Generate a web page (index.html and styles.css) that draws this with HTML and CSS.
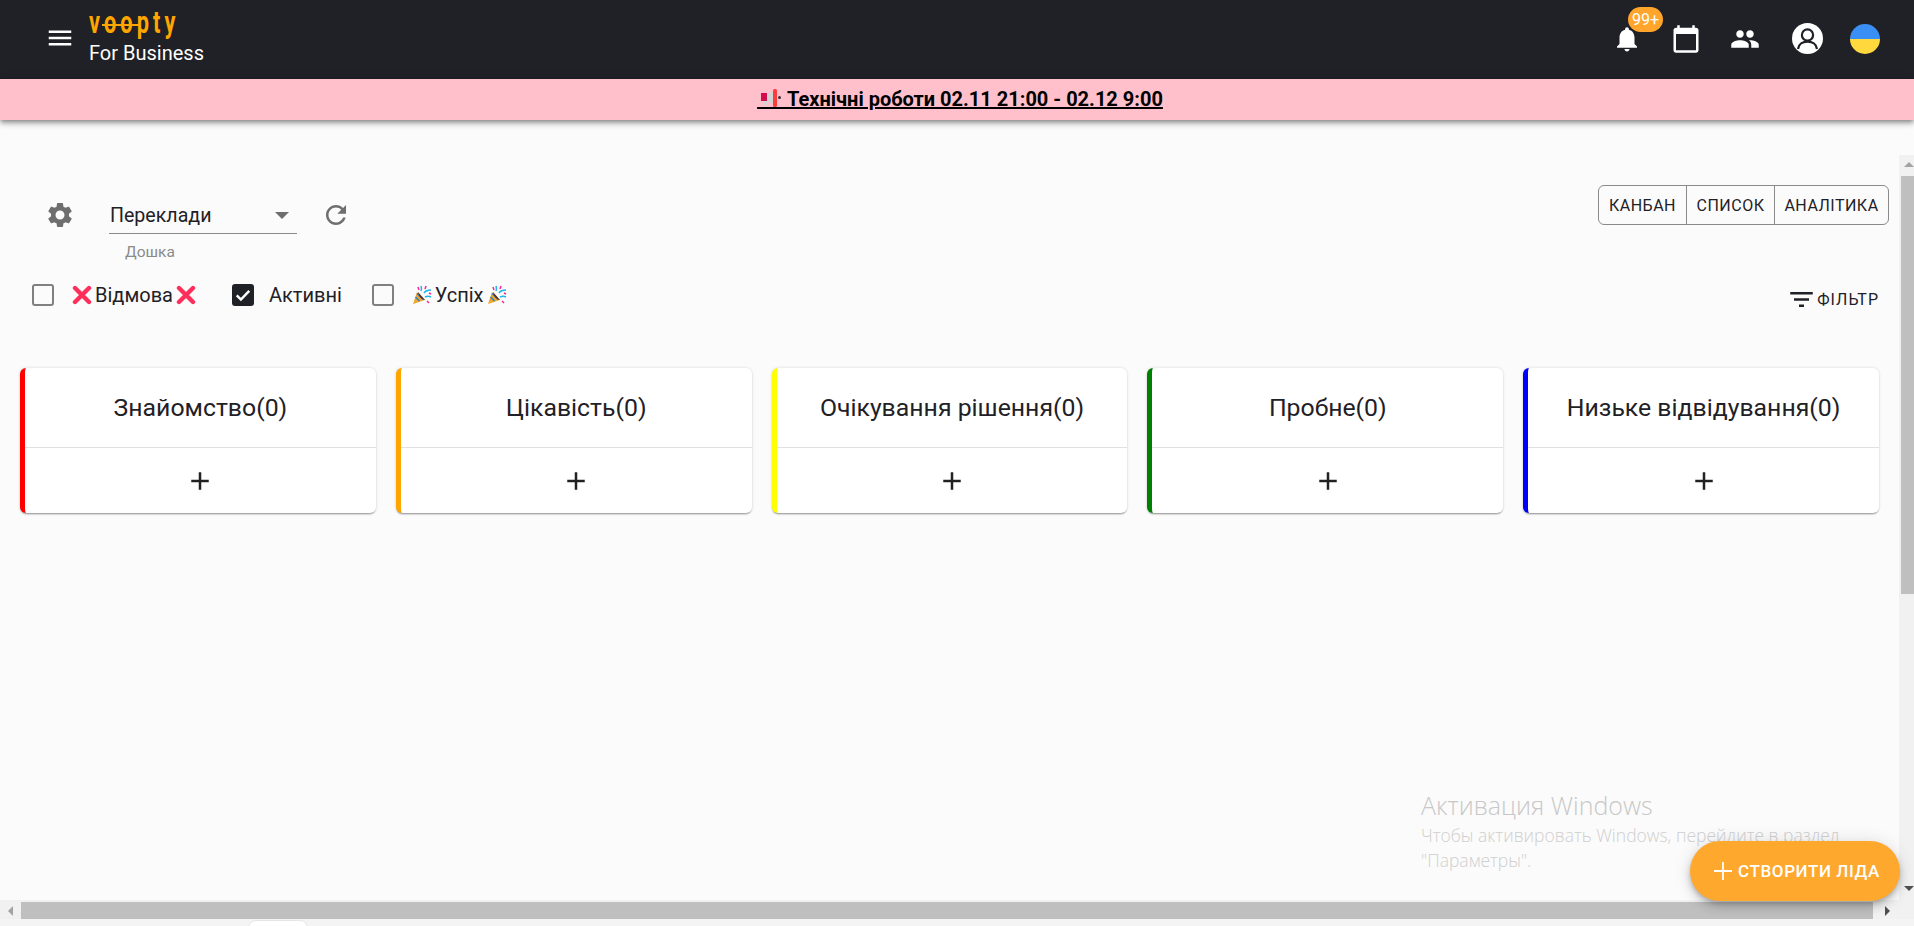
FILE: index.html
```html
<!DOCTYPE html>
<html lang="uk">
<head>
<meta charset="utf-8">
<title>Voopty For Business</title>
<link rel="stylesheet" href="styles.css">
</head>
<body>
<div class="app">
  <header class="topbar">
    <svg class="icon menu-icon" viewBox="0 0 24 24"><path d="M3 18h18v-2H3v2zm0-5h18v-2H3v2zm0-7v2h18V6H3z"/></svg>
    <div class="brand">
      <span class="logo"><span class="logo-text">voopty</span></span>
      <span class="brand-sub">For Business</span>
    </div>
    <nav class="top-actions">
      <span class="bell">
        <svg class="icon" viewBox="0 0 24 24"><path d="M12 22c1.1 0 2-.9 2-2h-4c0 1.1.89 2 2 2zm6-6v-5c0-3.07-1.64-5.64-4.5-6.32V4c0-.83-.67-1.5-1.5-1.5s-1.5.67-1.5 1.5v.68C7.63 5.36 6 7.92 6 11v5l-2 2v1h16v-1l-2-2z"/></svg>
        <span class="badge">99+</span>
      </span>
      <svg class="icon" viewBox="0 0 24 24"><path d="M20 3h-1V1h-2v2H7V1H5v2H4c-1.1 0-2 .9-2 2v16c0 1.1.9 2 2 2h16c1.1 0 2-.9 2-2V5c0-1.1-.9-2-2-2zm0 18H4V8h16v13z"/></svg>
      <svg class="icon" viewBox="0 0 24 24"><path d="M16 11c1.66 0 2.99-1.34 2.99-3S17.66 5 16 5c-1.66 0-3 1.34-3 3s1.34 3 3 3zm-8 0c1.66 0 2.99-1.34 2.99-3S9.66 5 8 5C6.34 5 5 6.34 5 8s1.34 3 3 3zm0 2c-2.33 0-7 1.17-7 3.5V19h14v-2.5c0-2.33-4.67-3.5-7-3.5zm8 0c-.29 0-.62.02-.97.05 1.16.84 1.97 1.97 1.97 3.45V19h6v-2.5c0-2.33-4.67-3.5-7-3.5z"/></svg>
      <svg class="avatar" viewBox="0 0 37 37"><circle cx="18.5" cy="18.5" r="15.5" fill="#fff"/><circle cx="18.5" cy="15" r="5.6" fill="#fff" stroke="#1f2126" stroke-width="2.2"/><path d="M9 29c.6-5 4.8-7.4 9.5-7.4S27.400 24 28 29" fill="#fff" stroke="#1f2126" stroke-width="2.2"/></svg>
      <span class="flag"></span>
    </nav>
  </header>

  <div class="banner">
    <a class="banner-link" href="#">&nbsp;&nbsp;&nbsp;&nbsp;&nbsp;&nbsp;Технічні роботи 02.11 21:00 - 02.12 9:00<svg class="megaphone" viewBox="0 0 20 18"><rect x="0" y="4" width="6" height="8" fill="#d0104c"/><path d="M6 5l8-4v15l-8-4z" fill="#d3d3d3"/><path d="M3 12h3v4H3z" fill="#d3d3d3"/><rect x="12" y="0" width="4" height="18" rx="1.5" fill="#ff3b3b"/><circle cx="18.5" cy="8.500" r="1.5" fill="#333"/></svg></a>
  </div>

  <div class="viewport">
    <main class="board">
      <div class="board-top">
        <div class="board-picker">
          <svg class="icon tool-icon" viewBox="0 0 24 24"><path d="M19.14 12.94c.04-.3.06-.61.06-.94 0-.32-.02-.64-.07-.94l2.03-1.58c.18-.14.23-.41.12-.61l-1.92-3.32c-.12-.22-.37-.29-.59-.22l-2.39.96c-.5-.38-1.03-.7-1.62-.94l-.36-2.54c-.04-.24-.24-.41-.48-.41h-3.84c-.24 0-.43.17-.47.41l-.36 2.54c-.59.24-1.13.57-1.62.94l-2.39-.96c-.22-.08-.47 0-.59.22L2.74 8.87c-.12.21-.08.47.12.61l2.03 1.58c-.05.3-.09.63-.09.94s.02.64.07.94l-2.03 1.58c-.18.14-.23.41-.12.61l1.92 3.32c.12.22.37.29.59.22l2.39-.96c.5.38 1.03.7 1.62.94l.36 2.54c.05.24.24.41.48.41h3.84c.24 0 .44-.17.47-.41l.36-2.54c.59-.24 1.13-.56 1.62-.94l2.39.96c.22.08.47 0 .59-.22l1.92-3.32c.12-.22.07-.47-.12-.61l-2.01-1.58zM12 15.6c-1.98 0-3.6-1.62-3.6-3.6s1.62-3.6 3.6-3.6 3.6 1.62 3.6 3.6-1.62 3.6-3.6 3.6z"/></svg>
          <div class="select-field">
            <div class="select-box"><span>Переклади</span><i class="caret"></i></div>
            <div class="select-help">Дошка</div>
          </div>
          <svg class="icon tool-icon" viewBox="0 0 24 24"><path d="M17.65 6.35C16.2 4.9 14.21 4 12 4c-4.42 0-7.99 3.58-7.99 8s3.57 8 7.99 8c3.73 0 6.84-2.55 7.73-6h-2.08c-.82 2.33-3.04 4-5.65 4-3.31 0-6-2.69-6-6s2.69-6 6-6c1.66 0 3.14.69 4.22 1.78L13 11h7V4l-2.35 2.35z"/></svg>
        </div>
        <div class="view-toggle">
          <span class="view-btn view-kanban">Канбан</span>
          <span class="view-btn view-list">Список</span>
          <span class="view-btn view-analytics">Аналітика</span>
        </div>
      </div>

      <div class="filter-row">
        <div class="status-checks">
          <label class="check">
            <span class="box"></span>
            <span class="check-label">
              <svg class="emoji" viewBox="0 0 20 20"><path d="M3 3l14 14M17 3L3 17" fill="none" stroke="#ff2f5b" stroke-width="4.4" stroke-linecap="round"/></svg>Відмова<svg class="emoji" viewBox="0 0 20 20"><path d="M3 3l14 14M17 3L3 17" fill="none" stroke="#ff2f5b" stroke-width="4.4" stroke-linecap="round"/></svg>
            </span>
          </label>
          <label class="check check-active">
            <span class="box box-on"><svg viewBox="0 0 24 24"><path d="M4.500 12.500l5 5L19.500 7" fill="none" stroke="#fff" stroke-width="3"/></svg></span>
            <span class="check-label">Активні</span>
          </label>
          <label class="check">
            <span class="box"></span>
            <span class="check-label">
              <svg class="emoji" viewBox="0 0 20 20"><path d="M1 19l4-12 8 8z" fill="#f0a82c"/><path d="M3.500 12l4 4M5 8.500l6 6" stroke="#2b7fd0" stroke-width="1.4"/><path d="M6 7l7 8c-2 .5-7-4-7-8z" fill="#5a2d1a"/><path d="M9 6c1-2 .5-3 0-5M12 8c2-3 4-3 7-3M13 12c2-1 4-1 6 0" fill="none" stroke="#21b5e8" stroke-width="1.5"/><path d="M6 2l1 3M14 1l-1 3M17 8l2 1M15 16l2 2" stroke="#f0289a" stroke-width="1.5"/></svg>Успіх<svg class="emoji" viewBox="0 0 20 20"><path d="M1 19l4-12 8 8z" fill="#f0a82c"/><path d="M3.500 12l4 4M5 8.500l6 6" stroke="#2b7fd0" stroke-width="1.4"/><path d="M6 7l7 8c-2 .5-7-4-7-8z" fill="#5a2d1a"/><path d="M9 6c1-2 .5-3 0-5M12 8c2-3 4-3 7-3M13 12c2-1 4-1 6 0" fill="none" stroke="#21b5e8" stroke-width="1.5"/><path d="M6 2l1 3M14 1l-1 3M17 8l2 1M15 16l2 2" stroke="#f0289a" stroke-width="1.5"/></svg>
            </span>
          </label>
        </div>
        <div class="filter-btn">
          <svg class="filter-icon" viewBox="3 6 18 12"><path d="M10 18h4v-2h-4v2zM3 6v2h18V6H3zm3 7h12v-2H6v2z"/></svg>
          <span>Фільтр</span>
        </div>
      </div>

      <section class="columns">
        <article class="card card-red"><h2 class="card-title">Знайомство(0)</h2><div class="card-add"><svg class="icon add-icon" viewBox="0 0 24 24"><path d="M19 13h-6v6h-2v-6H5v-2h6V5h2v6h6v2z"/></svg></div></article>
        <article class="card card-orange"><h2 class="card-title">Цікавість(0)</h2><div class="card-add"><svg class="icon add-icon" viewBox="0 0 24 24"><path d="M19 13h-6v6h-2v-6H5v-2h6V5h2v6h6v2z"/></svg></div></article>
        <article class="card card-yellow"><h2 class="card-title">Очікування рішення(0)</h2><div class="card-add"><svg class="icon add-icon" viewBox="0 0 24 24"><path d="M19 13h-6v6h-2v-6H5v-2h6V5h2v6h6v2z"/></svg></div></article>
        <article class="card card-green"><h2 class="card-title">Пробне(0)</h2><div class="card-add"><svg class="icon add-icon" viewBox="0 0 24 24"><path d="M19 13h-6v6h-2v-6H5v-2h6V5h2v6h6v2z"/></svg></div></article>
        <article class="card card-blue"><h2 class="card-title">Низьке відвідування(0)</h2><div class="card-add"><svg class="icon add-icon" viewBox="0 0 24 24"><path d="M19 13h-6v6h-2v-6H5v-2h6V5h2v6h6v2z"/></svg></div></article>
      </section>
    </main>

    <div class="vscroll">
      <i class="arrow arrow-up"></i>
      <div class="vthumb"></div>
      <div class="vrest"><i class="arrow arrow-down"></i></div>
    </div>
  </div>

  <div class="hscroll">
    <span class="harrow-cell"><i class="arrow arrow-left"></i></span>
    <div class="hthumb"></div>
    <span class="harrow-cell"><i class="arrow arrow-right"></i></span>
    <span class="corner"></span>
  </div>
  <div class="bottom-strip"><span class="tab-tip"></span></div>

  <aside class="watermark">
    <div class="wm-title">Активация Windows</div>
    <div class="wm-text">Чтобы активировать Windows, перейдите в раздел<br>"Параметры".</div>
  </aside>

  <button class="fab">
    <svg class="fab-icon" viewBox="5 5 14 14"><path d="M19 12.700h-6.300V19h-1.400v-6.300H5v-1.400h6.300V5h1.400v6.300H19z"/></svg>
    <span>Створити ліда</span>
  </button>
</div>
</body>
</html>
```
FILE: styles.css
```css
* { box-sizing: border-box; }
html, body { margin: 0; height: 100%; overflow: hidden; }
body {
  font-family: Roboto, "Noto Sans", sans-serif;
  color: #1f2126;
  background: #fbfbfb;
}
.app {
  position: relative;
  width: 1914px;
  height: 926px;
  display: flex;
  flex-direction: column;
  overflow: hidden;
}
.icon { width: 30px; height: 30px; fill: currentColor; flex: none; display: block; }

/* top bar */
.topbar {
  height: 79px;
  flex: none;
  display: flex;
  align-items: center;
  background: #1f2126;
  color: #fff;
  padding: 0 34px 3px 45px;
}
.brand { display: flex; flex-direction: column; margin-left: 14px; align-self: flex-start; padding-top: 7px; }
.logo { display: block; height: 30px; width: 90px; position: relative; }
.logo-text {
  display: inline-block;
  color: #ffa500;
  font: 700 32px/30px "Roboto", sans-serif;
  letter-spacing: 6px;
  transform: scaleX(.68);
  transform-origin: 0 50%;
}
.logo::after {
  content: "";
  position: absolute;
  left: 13px;
  width: 37px;
  top: 17px;
  height: 2px;
  background: #ffa500;
}
.brand-sub { font-size: 20px; font-weight: 400; line-height: 24px; margin-top: 4px; }
.top-actions { margin-left: auto; display: flex; align-items: center; gap: 29px; padding-top: 1px; }
.bell { position: relative; display: block; width: 30px; height: 30px; }
.badge {
  position: absolute;
  left: 16px;
  top: -17px;
  width: 35px;
  height: 25px;
  border-radius: 13px;
  background: #ffa52b;
  color: #fff;
  font-size: 16px;
  line-height: 25px;
  text-align: center;
}
.avatar { width: 37px; height: 37px; display: block; flex: none; }
.flag {
  display: block;
  width: 30px;
  height: 30px;
  margin-left: -5px;
  border-radius: 50%;
  background: linear-gradient(#3a8ff5 50%, #ffd83d 50%);
}

/* banner */
.banner {
  position: relative;
  z-index: 2;
  height: 41px;
  flex: none;
  background: #ffc0cb;
  box-shadow: 0 2px 4px -1px rgba(0,0,0,.3), 0 4px 5px rgba(0,0,0,.2), 0 1px 10px rgba(0,0,0,.12);
  display: flex;
  justify-content: center;
  align-items: center;
  padding-bottom: 2px;
}
.banner-link {
  position: relative;
  display: block;
  color: #000;
  font-size: 20px;
  font-weight: 700;
  line-height: 24px;
  text-decoration: underline;
  text-decoration-thickness: 2px;
  margin-left: 6px;
  white-space: nowrap;
}
.megaphone { position: absolute; left: 4px; top: 2px; width: 20px; height: 18px; }

/* main */
.viewport {
  flex: none;
  height: 780px;
  display: grid;
  grid-template-columns: 1fr 15px;
}
.board { min-width: 0; }
.board-top {
  display: flex;
  justify-content: space-between;
  align-items: flex-start;
  padding: 65px 10px 0 45px;
  height: 142px;
}
.board-picker { display: flex; align-items: flex-start; padding-top: 15px; }
.tool-icon { color: #6e6e6e; }
.select-field { width: 188px; margin: -3px 24px 0 34px; }
.select-box {
  height: 37px;
  border-bottom: 1px solid #8a8a8a;
  display: flex;
  align-items: center;
  justify-content: space-between;
  padding: 0 8px 0 1px;
  font-size: 19.600px;
}
.caret {
  width: 0; height: 0;
  border: 7px solid transparent;
  border-top-color: #6e6e6e;
  border-bottom: 0;
}
.select-help { font-size: 15.500px; color: #8a8a8a; padding: 10px 0 0 16px; line-height: 16px; }
.view-toggle { display: flex; border: 1px solid #8a8a8a; border-radius: 6px; height: 40px; }
.view-btn {
  display: flex;
  align-items: center;
  justify-content: center;
  font-size: 16px;
  letter-spacing: .5px;
  text-transform: uppercase;
}
.view-kanban { width: 88px; border-right: 1px solid #8a8a8a; }
.view-list { width: 88px; border-right: 1px solid #8a8a8a; }
.view-analytics { width: 113px; }

.filter-row {
  display: flex;
  justify-content: space-between;
  align-items: flex-start;
  padding: 22px 20px 0 32px;
  height: 106px;
}
.status-checks { display: flex; gap: 32px; }
.check { display: flex; align-items: center; gap: 16px; height: 22px; }
.check-active { margin: 0 -2px 0 2px; gap: 15px; }
.box {
  width: 22px;
  height: 22px;
  border: 2.5px solid #808080;
  border-radius: 3px;
  display: block;
  flex: none;
}
.box-on { background: #1f2126; border: 0; padding: 1px; }
.box-on svg { display: block; width: 20px; height: 20px; }
.check-label { font-size: 20px; display: flex; align-items: center; gap: 1px; line-height: 22px; }
.emoji { width: 20px; height: 20px; display: block; flex: none; margin: 0 2px; }
.filter-btn {
  display: flex;
  align-items: center;
  gap: 4px;
  font-size: 16px;
  letter-spacing: 1px;
  text-transform: uppercase;
  margin-top: 7px;
  height: 16px;
}
.filter-icon { width: 23px; height: 15px; fill: #1f2126; flex: none; }

.columns {
  display: grid;
  width: 1879px;
  grid-template-columns: repeat(5, 1fr);
  gap: 20px;
  padding-left: 20px;
}
.card {
  background: #fff;
  border-left: 5px solid;
  border-radius: 6px;
  box-shadow: 0 2px 2px -1px rgba(0,0,0,.4), 0 0 3px rgba(0,0,0,.15);
}
.card-red { border-left-color: #f00; }
.card-orange { border-left-color: #ffa500; }
.card-yellow { border-left-color: #ff0; }
.card-green { border-left-color: #008000; }
.card-blue { border-left-color: #00f; }
.card-title {
  margin: 0;
  height: 80px;
  border-bottom: 1px solid #e0e0e0;
  font-size: 24.800px;
  font-weight: 400;
  line-height: 79px;
  text-align: center;
}
.card-add { height: 65px; display: flex; align-items: center; justify-content: center; color: #212121; }

/* scrollbars */
.arrow { display: block; width: 0; height: 0; border: 5px solid transparent; }
.vscroll {
  margin-top: 35px;
  background: #f1f1f1;
  display: flex;
  flex-direction: column;
}
.arrow-up { border-top: 0; border-bottom-color: #a3a3a3; margin: 7px 0 0 5px; }
.vthumb { height: 418px; margin: 9px 0 0 2px; background: #bfbfbf; width: 13px; flex: none; }
.vrest { flex: 1; display: flex; flex-direction: column; justify-content: flex-end; padding-bottom: 9px; }
.arrow-down { border-bottom: 0; border-top-color: #505050; margin-left: 5px; }
.hscroll {
  height: 19px;
  flex: none;
  display: flex;
  background: #f1f1f1;
  padding-top: 2px;
}
.harrow-cell { width: 21px; display: flex; align-items: center; justify-content: center; flex: none; }
.arrow-left { border-left: 0; border-right-color: #a3a3a3; }
.arrow-right { border-right: 0; border-left-color: #505050; margin-left: 8px; }
.hthumb { width: 1852px; background: #bfbfbf; flex: none; }
.corner { flex: 1; }
.bottom-strip { flex: none; height: 7px; background: #f4f4f4; padding: 1px 0 0 248px; overflow: hidden; }
.tab-tip {
  display: block;
  width: 60px;
  height: 12px;
  background: #fff;
  border: 1px solid #e6e6e6;
  border-radius: 8px 8px 0 0;
}

/* overlays */
.watermark {
  position: absolute;
  left: 1421px;
  top: 789px;
  font-family: "Open Sans", sans-serif;
  color: #cfcfcf;
}
.wm-title { font-size: 25px; line-height: 32px; color: #c8c8c8; font-weight: 300; }
.wm-text { font-size: 17.500px; line-height: 25px; font-weight: 300; margin-top: 2px; white-space: nowrap; }
.fab {
  position: absolute;
  left: 1690px;
  top: 841px;
  width: 210px;
  height: 60px;
  border: 0;
  border-radius: 30px;
  background: #ffa82e;
  color: #fff;
  display: flex;
  align-items: center;
  justify-content: center;
  gap: 6px;
  font: 500 17px Roboto, sans-serif;
  letter-spacing: .6px;
  text-transform: uppercase;
  box-shadow: 0 3px 5px -1px rgba(0,0,0,.2), 0 6px 10px rgba(0,0,0,.14), 0 1px 18px rgba(0,0,0,.12);
  padding: 0 0 0 4px;
}
.fab-icon { width: 18px; height: 18px; fill: #fff; flex: none; }
```
